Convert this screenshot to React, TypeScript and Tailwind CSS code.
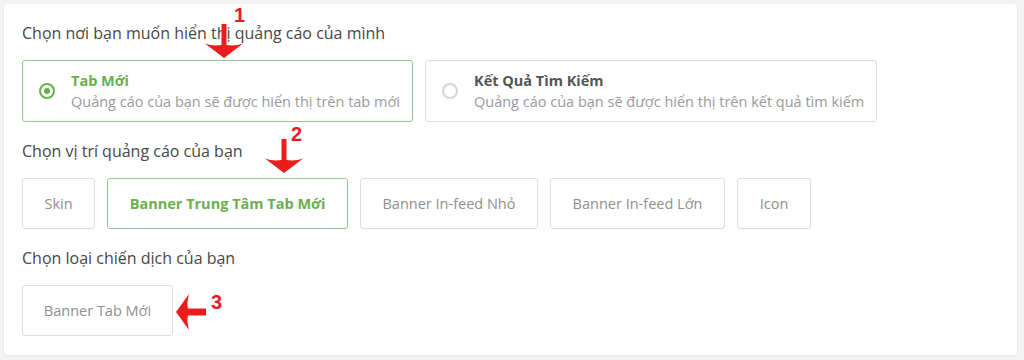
import type { ReactNode } from "react";

const GREEN = "text-[#6aaf4f]";

type Placement = { label: string; width: string; active?: boolean };

const placements: Placement[] = [
  { label: "Skin", width: "w-[73px]" },
  { label: "Banner Trung Tâm Tab Mới", width: "w-[241px]", active: true },
  { label: "Banner In-feed Nhỏ", width: "w-[178px]" },
  { label: "Banner In-feed Lớn", width: "w-[175px]" },
  { label: "Icon", width: "w-[74px]" },
];

function Heading({ children }: { children: ReactNode }) {
  return <h3 className="text-[16px] leading-[22px] text-[#474747] mb-4">{children}</h3>;
}

function Radio({ checked }: { checked?: boolean }) {
  return (
    <span
      className={
        checked
          ? "w-[16px] h-[16px] rounded-full border-2 border-[#6aaf4f] flex items-center justify-center flex-shrink-0"
          : "w-[16px] h-[16px] rounded-full border-2 border-[#d6d6d6] flex-shrink-0"
      }
    >
      {checked && <span className="w-[6px] h-[6px] rounded-full bg-[#6aaf4f]" />}
    </span>
  );
}

function OptionCard({
  title,
  desc,
  checked,
  width,
}: {
  title: string;
  desc: string;
  checked?: boolean;
  width: string;
}) {
  return (
    <div
      className={`${width} h-[62px] rounded-[3px] border flex items-center pl-[16px] gap-[16px] ${
        checked ? "border-[#93cc8d]" : "border-[#dedede]"
      }`}
    >
      <Radio checked={checked} />
      <div className="flex flex-col">
        <span className={`text-[14.5px] leading-[20px] font-bold ${checked ? GREEN : "text-[#555555]"}`}>
          {title}
        </span>
        <span className="text-[14.5px] leading-[21px] text-[#9a9a9a]">{desc}</span>
      </div>
    </div>
  );
}

function ChoiceButton({ label, width, active }: Placement) {
  return (
    <div
      className={`${width} h-[51px] rounded-[3px] border flex items-center justify-center text-[14.5px] ${
        active ? "border-[#93cc8d] font-bold text-[#6aaf4f]" : "border-[#dedede] text-[#8f8f8f]"
      }`}
    >
      {label}
    </div>
  );
}

// red annotation arrows drawn over the form
function DownArrow({ className }: { className: string }) {
  return (
    <svg className={className} width="40" height="34" viewBox="0 0 40 34">
      <path
        d="M17.5 0 H22.5 V21 C28 22 34 21.5 39 19.5 L20 34 L1 19.5 C6 21.5 12 22 17.5 21 Z"
        fill="#ec1c1c"
      />
    </svg>
  );
}

function LeftArrow({ className }: { className: string }) {
  return (
    <svg className={className} width="32" height="38" viewBox="0 0 32 38">
      <path
        d="M1 19 L14 1 C12.5 7 12 11 13 15.5 H31 V22.5 H13 C12 27 12.5 31 14 37 Z"
        fill="#ec1c1c"
      />
    </svg>
  );
}

function Num({ n, className }: { n: string; className: string }) {
  return (
    <span
      className={`absolute text-[20px] leading-none font-bold text-[#ec1c1c] font-['Liberation_Sans',Arial,sans-serif] ${className}`}
    >
      {n}
    </span>
  );
}

export default function App() {
  return (
    <div className="relative w-[1024px] h-[360px] bg-[#f3f3f3] pt-[4px] pl-[4px] font-['Open_Sans','Noto_Sans',sans-serif]">
      <div className="w-[1013px] h-[351px] bg-white rounded-[4px] shadow-[0_1px_3px_rgba(0,0,0,0.08)] pt-[18px] pl-[18px]">
        <section>
          <Heading>Chọn nơi bạn muốn hiển thị quảng cáo của mình</Heading>
          <div className="flex gap-3">
            <OptionCard
              checked
              width="w-[391px]"
              title="Tab Mới"
              desc="Quảng cáo của bạn sẽ được hiển thị trên tab mới"
            />
            <OptionCard
              width="w-[452px]"
              title="Kết Quả Tìm Kiếm"
              desc="Quảng cáo của bạn sẽ được hiển thị trên kết quả tìm kiếm"
            />
          </div>
        </section>

        <section className="mt-[18px]">
          <Heading>Chọn vị trí quảng cáo của bạn</Heading>
          <div className="flex gap-3">
            {placements.map((p) => (
              <ChoiceButton key={p.label} {...p} />
            ))}
          </div>
        </section>

        <section className="mt-[18px]">
          <Heading>Chọn loại chiến dịch của bạn</Heading>
          <ChoiceButton label="Banner Tab Mới" width="w-[151px]" />
        </section>
      </div>

      {/* annotations */}
      <Num n="1" className="left-[234px] top-[5px]" />
      <DownArrow className="absolute left-[204px] top-[24px]" />
      <Num n="2" className="left-[291px] top-[124px]" />
      <DownArrow className="absolute left-[264px] top-[139px]" />
      <Num n="3" className="left-[211px] top-[292px]" />
      <LeftArrow className="absolute left-[175px] top-[293px]" />
    </div>
  );
}
